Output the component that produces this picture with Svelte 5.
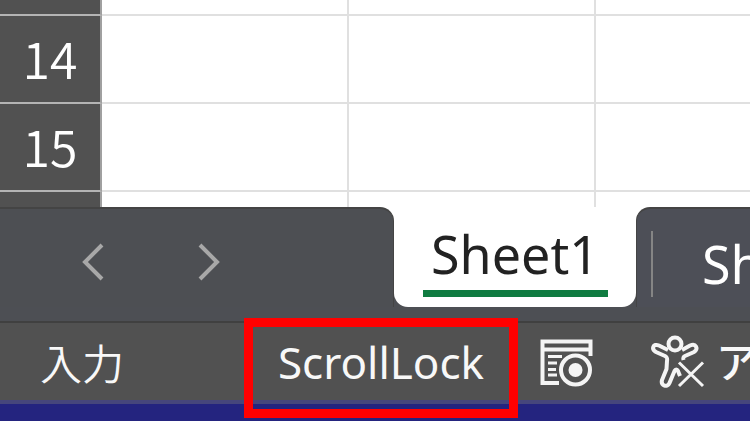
<script>
	let rows = [
		{ label: '', size: 'first' },
		{ label: '14', size: '' },
		{ label: '15', size: '' },
		{ label: '', size: 'last' }
	];

	let sheets = ['Sheet1', 'Sh'];
	let active = 'Sheet1';
</script>

<main>
	<table>
		<tbody>
			{#each rows as row}
				<tr class={row.size}>
					<th scope="row">{row.label}</th>
					<td class="col"></td>
					<td class="col"></td>
					<td></td>
				</tr>
			{/each}
		</tbody>
	</table>

	<div class="sheetbar">
		<nav class="arrows">
			<button aria-label="previous">
				<svg width="24" height="38" viewBox="0 0 24 38"><path d="M21 2 L4 19 L21 36" /></svg>
			</button>
			<button aria-label="next">
				<svg width="24" height="38" viewBox="0 0 24 38"><path d="M3 2 L20 19 L3 36" /></svg>
			</button>
		</nav>
		<button class="tab" on:click={() => (active = sheets[0])}>
			<span class:selected={active === sheets[0]}>{sheets[0]}</span>
		</button>
		<div class="others">
			<button on:click={() => (active = sheets[1])}>{sheets[1]}</button>
		</div>
	</div>

	<footer>
		<div class="mode">入力</div>
		<div class="scroll">ScrollLock</div>
		<button class="macro" aria-label="macro">
			<svg width="54" height="48" viewBox="0 0 54 48">
				<path d="M19 44 H2.500 V2.500 H50.500 V17" />
				<path d="M3 10.500 H50" />
				<path class="thin" d="M8 17.500 H22 M8 24 H17 M8 30.500 H16 M8 36 H17" />
				<circle cx="35.500" cy="31" r="14.500" />
				<circle class="dot" cx="35.500" cy="31" r="7" />
			</svg>
		</button>
		<button class="access">
			<svg width="54" height="56" viewBox="0 0 54 56">
				<circle cx="24" cy="10" r="6.500" />
				<path d="M17 16 L8 11.500 C2 9 0 15 5 18 L14 22 C16 23 16.500 24 16 27 L15.500 35 L11 46 C9.500 52 16.500 54 18.500 49 L23.500 37 C24.500 35 26 35 27 37 L29 42" />
				<path d="M31 16 L39 11.500 C45 9 48 15 43 18 L34 22 C32 23 32 24 32.500 26" />
				<path class="cross" d="M28 28.500 L52 52 M52 28.500 L28 52" />
			</svg>
			<span>ア</span>
		</button>
	</footer>
	<div class="desktop"></div>
</main>

<style>
:global(body) {
	margin: 0;
	background: #24247f;
}

main {
	font-family: "Noto Sans", "Noto Sans CJK JP", sans-serif;
	overflow: hidden;
}

button {
	font: inherit;
	color: inherit;
	background: none;
	border: none;
	padding: 0;
}

svg {
	display: block;
	fill: none;
	stroke: #f4f4f4;
	stroke-width: 4;
}

table {
	width: 100%;
	table-layout: fixed;
	border-collapse: separate;
	border-spacing: 0;
	background: #fff;
}

tr {
	height: 88px;
}

tr.first {
	height: 16px;
}

tr.last {
	height: 15px;
}

th,
td {
	box-sizing: border-box;
	padding: 0;
	border-bottom: 2px solid #e0e0e0;
}

th {
	width: 102px;
	background: #515151;
	border-right: 2px solid #a0a0a0;
	border-bottom-color: #b4b4b4;
	color: #fff;
	font-family: "Noto Sans CJK JP", sans-serif;
	font-size: 50px;
	font-weight: 350;
	line-height: 64px;
	padding-bottom: 4px;
}

.first th,
.last th {
	padding-bottom: 0;
}

.col {
	width: 247px;
	border-right: 2px solid #e0e0e0;
}

.last th,
.last td {
	border-bottom: none;
}

.sheetbar {
	display: flex;
	height: 100px;
	padding-bottom: 14px;
	background: linear-gradient(#fff 50px, #4d4f54 50px);
	color: #fff;
	font-size: 52px;
}

.arrows {
	box-sizing: border-box;
	flex: 0 0 394px;
	display: flex;
	align-items: center;
	gap: 92px;
	padding: 8px 0 0 81px;
	background: #4d4f53;
	border-top: 2px solid #444444;
	border-right: 1px solid #444444;
	border-top-right-radius: 14px;
}

.arrows svg {
	stroke: #a8a8a8;
	stroke-width: 4;
}

.tab {
	flex: 0 0 242px;
	display: flex;
	justify-content: center;
	align-items: flex-start;
	background: #fff;
	border-radius: 0 0 14px 14px;
	color: #222;
}

.tab span {
	width: 185px;
	height: 83px;
	line-height: 94px;
	border-bottom: 7px solid transparent;
}

.tab .selected {
	border-bottom-color: #107c41;
}

.others {
	box-sizing: border-box;
	flex: 1;
	min-width: 0;
	display: flex;
	align-items: center;
	padding: 12px 0 0 14px;
	background: #4d4f57;
	border-top: 2px solid #444444;
	border-left: 1px solid #444444;
	border-top-left-radius: 14px;
}

.others button {
	height: 66px;
	line-height: 66px;
	padding-left: 49px;
	border-left: 2px solid #858585;
}

footer {
	box-sizing: border-box;
	display: flex;
	align-items: center;
	height: 83px;
	background: #515151;
	border-top: 2px solid #404040;
	border-bottom: 4px solid #46467c;
	color: #f8f8f8;
	font-size: 44px;
	line-height: 78px;
}

.mode {
	flex: 0 0 204px;
	padding-left: 40px;
	font-family: "Noto Sans CJK JP", sans-serif;
	font-size: 42px;
	font-weight: 350;
}

.scroll {
	position: relative;
	flex: 0 0 274px;
	text-align: center;
}

/* red marker over the scroll lock indicator */
.scroll::before {
	content: "";
	position: absolute;
	inset: -5px 0 -17px;
	border: 9px solid #ff0000;
}

.macro {
	margin-left: 22px;
	padding-top: 3px;
}

.access {
	display: flex;
	align-items: center;
	margin-left: 57px;
	font-family: "Noto Sans CJK JP", sans-serif;
	font-size: 42px;
	font-weight: 500;
	line-height: 72px;
}

.access span {
	margin-left: 11px;
	padding-bottom: 4px;
}

.thin,
.cross {
	stroke-width: 3;
}

.dot {
	fill: #f4f4f4;
	stroke: none;
}

.desktop {
	height: 17px;
	background: #24247f;
}
</style>
